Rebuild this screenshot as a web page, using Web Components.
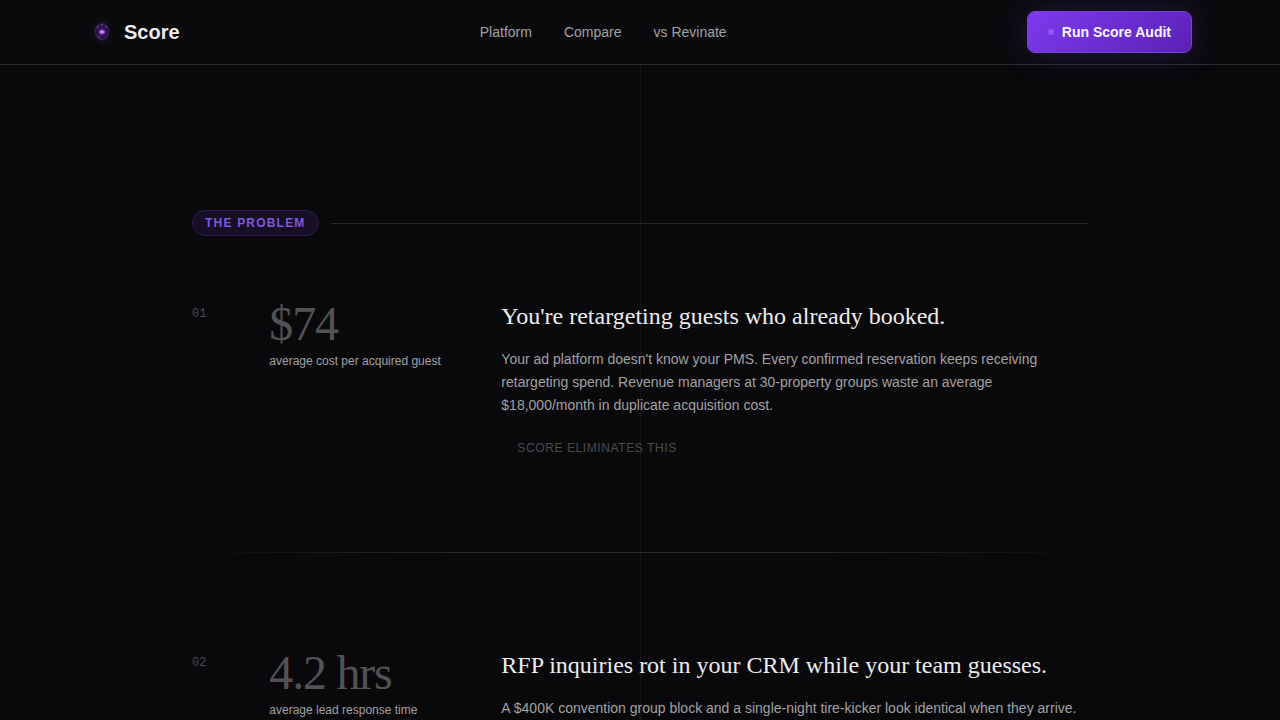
<!DOCTYPE html>
<html lang="en">
<head>
<meta charset="utf-8">
<meta name="viewport" content="width=device-width, initial-scale=1">
<title>Score</title>
<style>
  html { background: #09090b; scrollbar-width: none; }
  body {
    margin: 0;
    color: #ececee;
    font-family: "Liberation Sans", Arial, sans-serif;
    --line: #29292b;
    --muted: #a1a1a3;
    --dim: #525255;
    --serif: "Liberation Serif", "Times New Roman", serif;
    --mono: "Liberation Mono", "Courier New", monospace;
  }
</style>
</head>
<body>
<score-nav>
  <score-logo slot="brand">Score</score-logo>
  <nav-link to="#platform">Platform</nav-link>
  <nav-link to="#compare">Compare</nav-link>
  <nav-link to="#revinate">vs Revinate</nav-link>
  <cta-button slot="action">Run Score Audit</cta-button>
</score-nav>
<problem-section>
  <section-label slot="label">The Problem</section-label>
  <problem-row>
    <span slot="index">01</span>
    <span slot="value">$74</span>
    <span slot="caption">average cost per acquired guest</span>
    <span slot="title">You're retargeting guests who already booked.</span>
    <span slot="text">Your ad platform doesn't know your PMS. Every confirmed reservation keeps receiving retargeting spend. Revenue managers at 30-property groups waste an average $18,000/month in duplicate acquisition cost.</span>
  </problem-row>
  <fade-rule></fade-rule>
  <problem-row>
    <span slot="index">02</span>
    <span slot="value">4.2 hrs</span>
    <span slot="caption">average lead response time</span>
    <span slot="title">RFP inquiries rot in your CRM while your team guesses.</span>
    <span slot="text">A $400K convention group block and a single-night tire-kicker look identical when they arrive.</span>
  </problem-row>
</problem-section>
<script>
  const define = (name, html, setup) => {
    const template = document.createElement('template');
    template.innerHTML = html;
    customElements.define(name, class extends HTMLElement {
      constructor() {
        super();
        this.attachShadow({ mode: 'open' }).append(template.content.cloneNode(true));
      }
      connectedCallback() { if (setup) setup(this); }
    });
  };

  define('score-nav', `
    <style>
      :host { display: block; position: sticky; top: 0; z-index: 2; background: #0a0a0c; border-bottom: 1px solid #2b2b2e; }
      header { box-sizing: border-box; max-width: 1152px; height: 64px; margin: 0 auto; padding: 0 24px; display: flex; align-items: center; justify-content: space-between; }
      nav { display: flex; gap: 32px; }
    </style>
    <header><slot name="brand"></slot><nav aria-label="Main"><slot></slot></nav><slot name="action"></slot></header>`);

  define('score-logo', `
    <style>
      :host { display: block; }
      a { display: flex; align-items: center; gap: 8px; color: #ececee; text-decoration: none; font-size: 20px; line-height: 28px; font-weight: 700; }
      svg { display: block; width: 28px; height: 28px; }
    </style>
    <a href="#top">
      <svg viewBox="0 0 28 28" aria-hidden="true">
        <defs>
          <radialGradient id="halo"><stop offset="0" stop-color="#7c3aed" stop-opacity=".55"/><stop offset=".6" stop-color="#4c1d95" stop-opacity=".35"/><stop offset="1" stop-color="#4c1d95" stop-opacity="0"/></radialGradient>
          <radialGradient id="core"><stop offset="0" stop-color="#ffe8ff"/><stop offset=".4" stop-color="#c95fec"/><stop offset="1" stop-color="#a855f7" stop-opacity="0"/></radialGradient>
        </defs>
        <circle cx="14" cy="14" r="12" fill="#0c0b10" stroke="#0f0e13"/>
        <ellipse cx="14" cy="14" rx="9" ry="11" fill="url(#halo)"/>
        <g fill="none" stroke="#8b4bb8" stroke-opacity=".35">
          <path d="M8 10Q14 2 20 9M8 10Q6 15 9 19M20 9Q22 14 19 18M9 19Q14 25 19 18"/>
        </g>
        <g fill="#9855bd" fill-opacity=".6">
          <circle cx="10" cy="9" r="1"/><circle cx="14" cy="7" r="1"/><circle cx="18" cy="9" r="1"/><circle cx="11" cy="19" r="1"/>
        </g>
        <ellipse cx="14" cy="14" rx="4" ry="3" fill="url(#core)"/>
      </svg>
      <slot></slot>
    </a>`);

  define('nav-link', `
    <style>
      :host { display: block; }
      a { display: block; color: var(--muted); text-decoration: none; font-size: 14px; line-height: 20px; }
      a:hover { color: #fafafa; }
    </style>
    <a><slot></slot></a>`,
    el => { el.shadowRoot.querySelector('a').href = el.getAttribute('to'); });

  define('cta-button', `
    <style>
      :host { display: block; }
      button { display: flex; align-items: center; gap: 8px; padding: 10px 20px; border: 1px solid #7443d4; border-radius: 8px; background: linear-gradient(135deg, #7c3aed, #5b21b6); box-shadow: 0 0 32px rgba(124, 58, 237, .22); color: #faf5ff; font-family: inherit; font-size: 14px; line-height: 20px; font-weight: 700; cursor: pointer; }
      i { width: 6px; height: 6px; border-radius: 50%; background: #8b5cf6; }
    </style>
    <button type="button"><i></i><slot></slot></button>`);

  define('problem-section', `
    <style>
      :host { display: block; position: relative; overflow: hidden; }
      .axis { position: absolute; top: 0; bottom: 0; left: 50%; width: 1px; background: #151517; }
      section { position: relative; box-sizing: border-box; max-width: 944px; margin: 0 auto; padding: 145px 24px 0; }
      .rows { margin-top: 64px; }
    </style>
    <div class="axis"></div>
    <section><slot name="label"></slot><div class="rows"><slot></slot></div></section>`);

  define('section-label', `
    <style>
      :host { display: flex; align-items: center; gap: 12px; }
      span { padding: 4px 12px; border: 1px solid #2c1b52; border-radius: 13px; background: #160f26; color: #8058df; font-size: 12px; line-height: 16px; font-weight: 700; letter-spacing: .1em; text-transform: uppercase; }
      hr { flex: 1; height: 1px; margin: 0; border: 0; background: var(--line); }
    </style>
    <span><slot></slot></span><hr>`);

  define('fade-rule', `
    <style>
      :host { display: block; }
      hr { height: 1px; margin: 96px 0; border: 0; background: linear-gradient(90deg, transparent, #2b2b2e 30%, #2b2b2e 70%, transparent); }
    </style>
    <hr>`);

  define('problem-row', `
    <style>
      :host { display: block; }
      article { display: grid; grid-template-columns: repeat(12, 1fr); column-gap: 32px; }
      .index { padding-top: 4px; color: #4a4a4d; font-family: var(--mono); font-size: 12px; line-height: 20px; }
      .stat { grid-column: span 3; }
      .copy { grid-column: span 8; }
      .value { color: var(--dim); font-family: var(--serif); font-size: 48px; line-height: 48px; letter-spacing: -.025em; }
      .caption { margin-top: 4px; color: var(--muted); font-size: 12px; line-height: 18px; }
      h3 { margin: 0; color: #ececee; font-family: var(--serif); font-size: 24px; line-height: 32px; font-weight: 400; }
      p { max-width: 576px; margin: 16px 0 0; color: var(--muted); font-size: 14px; line-height: 23px; }
      .tag { margin-top: 23px; padding-left: 16px; color: #4b4b4e; font-size: 12px; line-height: 16px; letter-spacing: .05em; text-transform: uppercase; }
    </style>
    <article>
      <div class="index"><slot name="index"></slot></div>
      <div class="stat">
        <div class="value"><slot name="value"></slot></div>
        <div class="caption"><slot name="caption"></slot></div>
      </div>
      <div class="copy">
        <h3><slot name="title"></slot></h3>
        <p><slot name="text"></slot></p>
        <div class="tag">Score eliminates this</div>
      </div>
    </article>`);
</script>
</body>
</html>
